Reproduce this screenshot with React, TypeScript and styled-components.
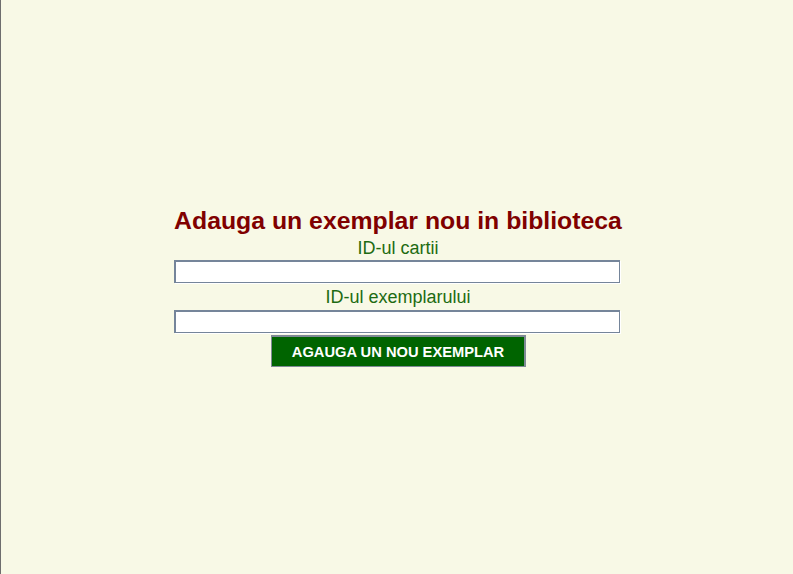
import React from "react";
import styled, { createGlobalStyle } from "styled-components";

const Global = createGlobalStyle`
  html, body { margin: 0; padding: 0; height: 100%; }
  body {
    background: #f8f9e6;
    font-family: "Liberation Sans", Arial, sans-serif;
  }
  #root { height: 100%; }
`;

const Page = styled.div`
  height: 100vh;
  box-sizing: border-box;
  border-left: 1px solid #6e6e6e;
  display: flex;
  align-items: center;
  justify-content: center;
`;

const Form = styled.form`
  width: 446px;
  display: flex;
  flex-direction: column;
  align-items: center;
`;

const Title = styled.h2`
  margin: 0 0 3px;
  font-size: 24.8px;
  font-weight: bold;
  color: #800000;
  line-height: 28px;
  white-space: nowrap;
  transform: translateX(1px);
`;

const Label = styled.label<{ $after: number }>`
  font-size: 18px;
  color: #1d6b12;
  line-height: 20px;
  margin: 0 0 ${(p) => p.$after}px 2px;
`;

const Field = styled.input<{ $after: number }>`
  width: 446px;
  height: 23px;
  box-sizing: border-box;
  background: #fff;
  border: 1px solid #75859a;
  border-top-width: 2px;
  border-left-width: 2px;
  box-shadow: 1px 1px 0 #fff;
  margin: 0 0 ${(p) => p.$after}px;
  padding: 0 2px;
  font-family: "Liberation Sans", Arial, sans-serif;
  font-size: 14px;
  caret-color: #000;
  outline: none;
`;

const Button = styled.button`
  width: 255px;
  height: 32px;
  margin-left: 3px;
  background: #006400;
  color: #fff;
  font-family: "Liberation Sans", Arial, sans-serif;
  font-weight: bold;
  font-size: 14.7px;
  border: 1px solid #7f8a96;
  border-top-width: 2px;
  border-right-width: 2px;
  padding: 0;
  cursor: pointer;
`;

export default function App() {
  return (
    <>
      <Global />
      <Page>
        <Form onSubmit={(e) => e.preventDefault()}>
          <Title>Adauga un exemplar nou in biblioteca</Title>
          <Label htmlFor="carte" $after={2}>ID-ul cartii</Label>
          <Field id="carte" type="text" $after={4} autoFocus />
          <Label htmlFor="exemplar" $after={3}>ID-ul exemplarului</Label>
          <Field id="exemplar" type="text" $after={2} />
          <Button type="submit">AGAUGA UN NOU EXEMPLAR</Button>
        </Form>
      </Page>
    </>
  );
}
